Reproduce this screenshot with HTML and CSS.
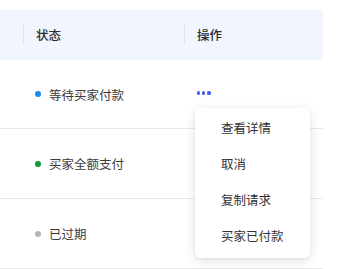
FILE: index.html
```html
<!DOCTYPE html>
<html lang="zh">
<head>
<meta charset="utf-8">
<link rel="stylesheet" href="styles.css">
</head>
<body>
<div class="wrap">
  <div class="table">
    <div class="thead">
      <div class="th th-status"><span class="sep"></span>状态</div>
      <div class="th th-op"><span class="sep"></span>操作</div>
    </div>
    <div class="tr">
      <div class="td td-status"><span class="dot blue"></span>等待买家付款</div>
      <div class="td td-op"><span class="more"><i></i><i></i><i></i></span></div>
    </div>
    <div class="tr">
      <div class="td td-status"><span class="dot green"></span>买家全额支付</div>
      <div class="td td-op"></div>
    </div>
    <div class="tr">
      <div class="td td-status"><span class="dot grey"></span>已过期</div>
      <div class="td td-op"></div>
    </div>
  </div>
  <ul class="menu">
    <li>查看详情</li>
    <li>取消</li>
    <li>复制请求</li>
    <li>买家已付款</li>
  </ul>
</div>
</body>
</html>
```

FILE: styles.css
```css
html, body {
  margin: 0;
  padding: 0;
  background: #ffffff;
}
body {
  font-family: "Noto Sans CJK SC", "Noto Sans", sans-serif;
  font-size: 12.5px;
  color: #333;
}
.wrap {
  position: relative;
  width: 352px;
  height: 269px;
  overflow: hidden;
  padding-top: 10px;
  box-sizing: border-box;
}
.table {
  width: 323px;
}
.thead {
  display: flex;
  height: 50px;
  align-items: center;
  background: #f1f6fe;
  border-radius: 0 4px 4px 0;
  padding-left: 23px;
  font-weight: 500;
  color: #2b2b2b;
}
.th {
  display: flex;
  align-items: center;
  height: 20px;
  margin-top: -2px;
}
.sep {
  display: block;
  width: 1px;
  height: 20px;
  background: #e1e5ec;
  margin-right: 12px;
}
.th-status { width: 161px; }
.th-op { flex: 1; }
.tr {
  display: flex;
  align-items: center;
  height: 68px;
  border-bottom: 1px solid #e9e9e9;
  padding-left: 35px;
}
.tr + .tr { height: 69px; }
.td-status {
  width: 162px;
  display: flex;
  align-items: center;
  color: #3a3a3a;
}
.dot {
  width: 6px;
  height: 6px;
  border-radius: 50%;
  margin-right: 8px;
}
.blue { background: #1a8cf0; }
.green { background: #0b9a3c; }
.grey { background: #b5b5b5; }
.more {
  display: flex;
  gap: 2px;
  margin-top: -2px;
}
.more i {
  display: block;
  width: 3.2px;
  height: 3.2px;
  border-radius: 50%;
  background: #4a62e6;
}
.menu {
  position: absolute;
  left: 195px;
  top: 108px;
  width: 115px;
  margin: 0;
  padding: 2px 0 4px;
  list-style: none;
  background: #fff;
  border-radius: 6px;
  box-shadow: 0 3px 12px rgba(0, 0, 0, 0.12), 0 1px 3px rgba(0, 0, 0, 0.05);
}
.menu li {
  height: 36px;
  line-height: 36px;
  padding-left: 26px;
  color: #333;
}
```
